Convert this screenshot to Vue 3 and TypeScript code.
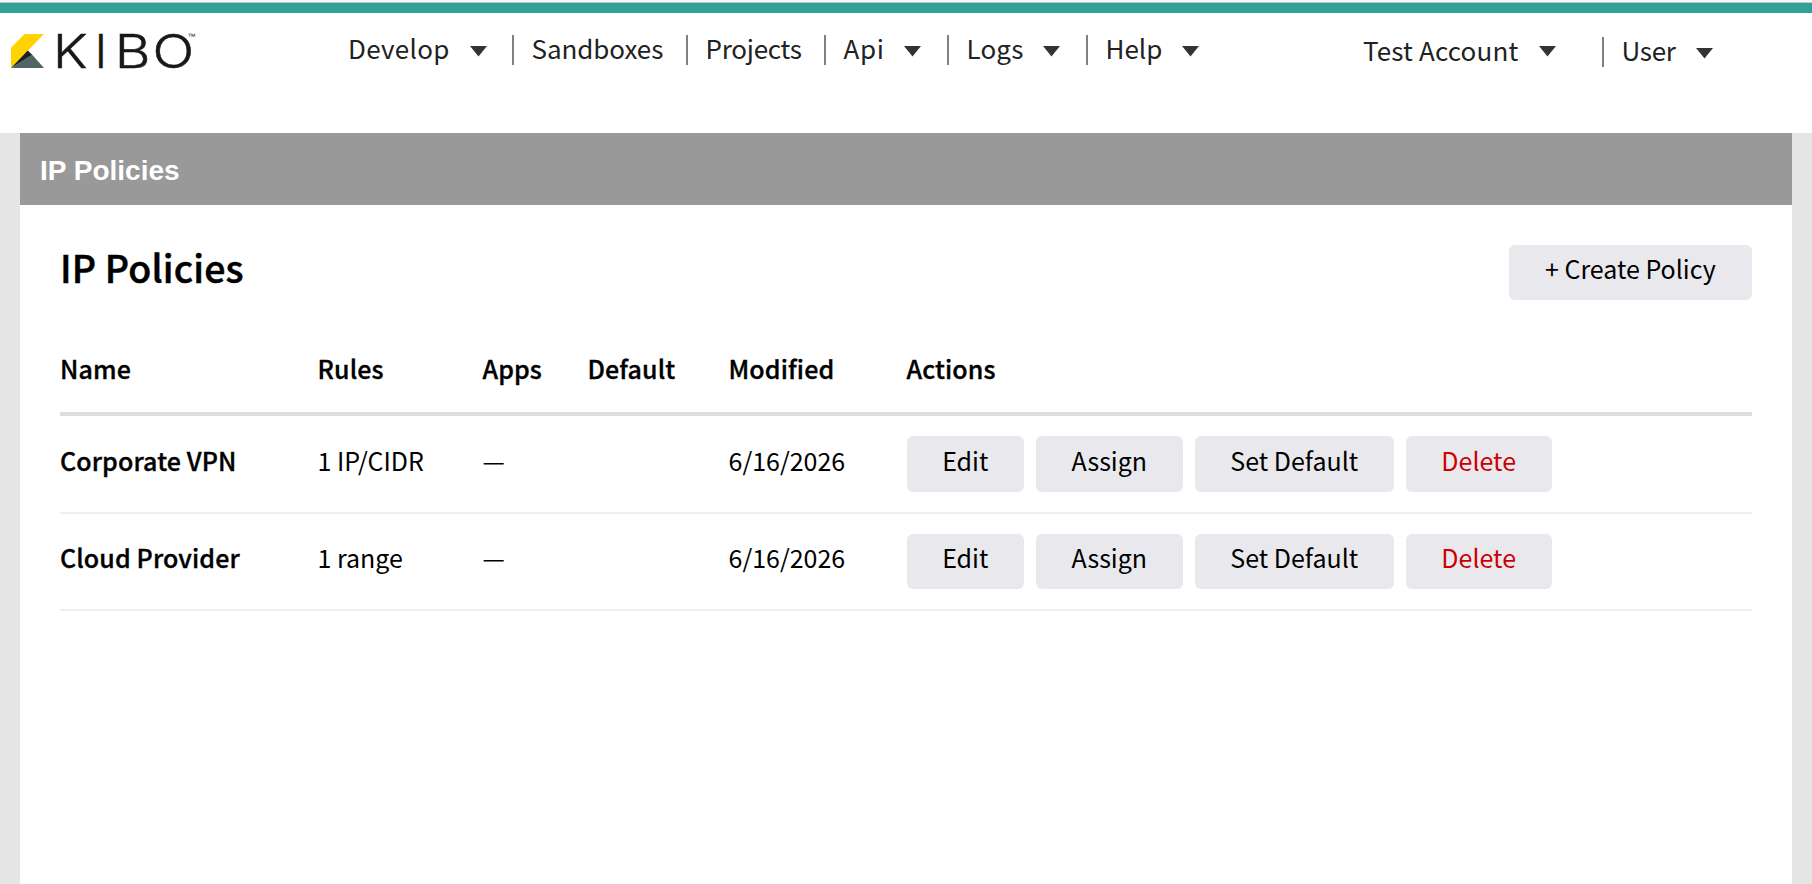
<script setup lang="ts">
interface NavItem {
  label: string
  width: number
  tracking: number
  menu: boolean
}

interface Policy {
  name: string
  rules: string
  apps: string
  isDefault: string
  modified: string
}

const mainNav: NavItem[] = [
  { label: 'Develop', width: 164, tracking: 0.3, menu: true },
  { label: 'Sandboxes', width: 174, tracking: -0.08, menu: false },
  { label: 'Projects', width: 138, tracking: -0.25, menu: false },
  { label: 'Api', width: 123, tracking: 0.6, menu: true },
  { label: 'Logs', width: 139, tracking: 0.15, menu: true },
  { label: 'Help', width: 114, tracking: 0, menu: true },
]

const accountNav: NavItem[] = [
  { label: 'Test Account', width: 239, tracking: 0.15, menu: true },
  { label: 'User', width: 112, tracking: -0.3, menu: true },
]

const columns = ['Name', 'Rules', 'Apps', 'Default', 'Modified', 'Actions']

const policies: Policy[] = [
  { name: 'Corporate VPN', rules: '1 IP/CIDR', apps: '—', isDefault: '', modified: '6/16/2026' },
  { name: 'Cloud Provider', rules: '1 range', apps: '—', isDefault: '', modified: '6/16/2026' },
]

const actions = ['Edit', 'Assign', 'Set Default', 'Delete']
</script>

<template>
  <div class="page">
    <header class="top">
      <svg class="logo" width="196" height="44" viewBox="0 0 196 44" role="img" aria-label="KIBO">
        <path d="M0 13.7 13.6 0H33L0 34Z" fill="#ffd200" />
        <path d="M16.8 16.6 21.4 21 0 34Z" fill="#1b2023" />
        <path d="M21 20.6 33 34H0Z" fill="#536467" />
        <g class="wordmark">
          <text transform="translate(41.9 34) scale(1.143 1)">K</text>
          <text transform="translate(83.7 34)">I</text>
          <text transform="translate(103.7 34) scale(1.18 1)">B</text>
          <text transform="translate(141.5 34) scale(1.178 1)">O</text>
        </g>
        <text class="tm" x="176.4" y="5">™</text>
      </svg>
      <nav class="nav main-nav">
        <div v-for="item in mainNav" :key="item.label" class="nav-item" :style="{ width: item.width + 'px' }">
          <span class="nav-label" :style="{ letterSpacing: item.tracking + 'px' }">{{ item.label }}</span>
          <svg v-if="item.menu" class="caret" width="17" height="11" viewBox="0 0 17 11">
            <path d="M0 0H17L8.5 10.5Z" fill="#333" />
          </svg>
        </div>
      </nav>
      <nav class="nav account-nav">
        <div v-for="item in accountNav" :key="item.label" class="nav-item" :style="{ width: item.width + 'px' }">
          <span class="nav-label" :style="{ letterSpacing: item.tracking + 'px' }">{{ item.label }}</span>
          <svg class="caret" width="17" height="11" viewBox="0 0 17 11">
            <path d="M0 0H17L8.5 10.5Z" fill="#333" />
          </svg>
        </div>
      </nav>
    </header>

    <main class="body">
      <div class="crumb">IP Policies</div>
      <section class="content">
        <div class="heading">
          <h1>IP Policies</h1>
          <button class="btn create">+ Create Policy</button>
        </div>
        <div class="row head">
          <div v-for="col in columns" :key="col">{{ col }}</div>
        </div>
        <div v-for="policy in policies" :key="policy.name" class="row">
          <div class="cell name">{{ policy.name }}</div>
          <div class="cell">{{ policy.rules }}</div>
          <div class="cell">{{ policy.apps }}</div>
          <div class="cell">{{ policy.isDefault }}</div>
          <div class="cell">{{ policy.modified }}</div>
          <div class="actions">
            <button v-for="action in actions" :key="action" class="btn" :class="{ danger: action === 'Delete' }">
              <span class="btn-label">{{ action }}</span>
            </button>
          </div>
        </div>
      </section>
    </main>
  </div>
</template>

<style>
body {
  margin: 0;
  overflow: hidden;
}
</style>

<style scoped>
.page {
  box-sizing: border-box;
  display: flex;
  flex-direction: column;
  height: 884px;
  border-top: 2px solid #f6f6f8;
  background: #fff;
  color: #000;
  font: 400 25px "Noto Sans CJK SC", "Noto Sans", sans-serif;
}
.top {
  box-sizing: border-box;
  flex: none;
  display: flex;
  align-items: flex-start;
  height: 131px;
  border-top: 1px solid #c6c6c9;
  padding-left: 11px;
  position: relative;
}
.top::before {
  content: "";
  position: absolute;
  left: 0;
  top: 0;
  width: 100%;
  height: 10px;
  background: #2fa196;
}
.logo {
  margin-top: 31px;
  overflow: visible;
}
.wordmark {
  font: 300 46.6px Inter, sans-serif;
  fill: #16191b;
  stroke: #16191b;
  stroke-width: 0.5px;
}
.tm {
  font: 400 8px "Liberation Sans", sans-serif;
  fill: #16191b;
}
.nav {
  display: flex;
  font-size: 26px;
  line-height: 26px;
  color: #222;
}
.main-nav {
  margin: 32px 0 0 141px;
}
.account-nav {
  margin: 34px 0 0 163px;
}
.nav-item {
  box-sizing: border-box;
  display: flex;
  height: 30px;
  white-space: nowrap;
}
.nav-item + .nav-item {
  border-left: 2px solid #808080;
  padding-left: 17.5px;
}
.caret {
  margin: 11px 0 0 20px;
}
.account-nav .nav-item:first-child .caret {
  margin: 9px 0 0 20.5px;
}
.body {
  flex: 1;
  padding: 0 20px;
  background: #e5e5e5;
  display: flex;
  flex-direction: column;
}
.crumb {
  height: 72px;
  padding-left: 20px;
  background: #999;
  color: #fff;
  font: 700 28px/76px "Liberation Sans", Arial, sans-serif;
}
.content {
  flex: 1;
  padding: 40px;
  background: #fff;
}
.heading {
  display: flex;
  justify-content: space-between;
  height: 95px;
}
h1 {
  margin: 0;
  font-size: 37.5px;
  line-height: 44px;
  font-weight: 500;
  letter-spacing: 0.15px;
  -webkit-text-stroke: 0.5px #000;
}
.btn {
  box-sizing: border-box;
  height: 55.5px;
  margin: 0;
  border: 0;
  border-radius: 6px;
  padding: 0 35.6px 7.5px;
  background: #e9e9ed;
  color: #000;
  font: inherit;
  line-height: 48px;
  white-space: nowrap;
}
.btn-label {
  display: block;
  margin: -0.1px 0 0.1px;
}
.create {
  height: 55px;
  padding: 0 36.3px 9px 35.7px;
  line-height: 46px;
}
.danger {
  color: #cc0000;
}
.row {
  display: grid;
  grid-template-columns: 257.5px 165px 105px 141px 178.05px 1fr;
  padding: 20px 0;
  height: 55.5px;
  border-bottom: 2px solid #eee;
  line-height: 48px;
}
.cell {
  margin-top: -0.1px;
}
.head {
  height: 72px;
  padding: 0;
  border-bottom: 4px solid #ddd;
  line-height: 56px;
}
.head,
.name {
  font-weight: 500;
  letter-spacing: 0.12px;
  -webkit-text-stroke: 0.35px #000;
}
.actions {
  display: flex;
  gap: 12px;
}
</style>
